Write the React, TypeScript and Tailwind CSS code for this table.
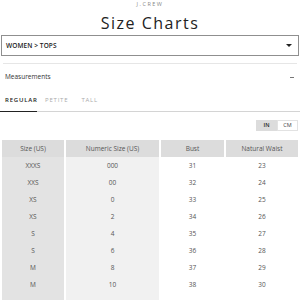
const rows = [
  ["XXXS", "000", "31", "23"],
  ["XXS", "00", "32", "24"],
  ["XS", "0", "33", "25"],
  ["XS", "2", "34", "26"],
  ["S", "4", "35", "27"],
  ["S", "6", "36", "28"],
  ["M", "8", "37", "29"],
  ["M", "10", "38", "30"],
];

const headers = ["Size (US)", "Numeric Size (US)", "Bust", "Natural Waist"];

export default function App() {
  return (
    <div className="w-[300px] h-[300px] overflow-hidden bg-white text-[#333] font-['Open_Sans',sans-serif]">
      {/* title */}
      <div className="text-center pt-[1px]">
        <div className="text-[5.5px] leading-[7px] tracking-[1.5px] text-[#888]">J.CREW</div>
        <div className="mt-[5px] text-[16px] leading-[20px] tracking-[1.5px] text-[#222]">Size Charts</div>
      </div>

      {/* category select */}
      <div className="mx-[1px] mt-[2px] h-[21px] border border-[#8f8f8f] flex items-center justify-between pl-[4px] pr-[6px]">
        <span className="text-[6.5px] font-semibold tracking-[0.1px] text-[#222]">WOMEN &gt; TOPS</span>
        <span className="w-0 h-0 border-l-[3px] border-r-[3px] border-t-[3px] border-l-transparent border-r-transparent border-t-[#222]" />
      </div>

      <div className="mx-[3px] mt-[7px] border-t border-[#e6e6e6]" />

      {/* measurements */}
      <div className="h-[26px] flex items-center justify-between pl-[5px] pr-[6px]">
        <span className="text-[6.5px] text-[#333]">Measurements</span>
        <span className="w-[4px] h-[1px] bg-[#777]" />
      </div>

      {/* tabs */}
      <div className="mt-[6px] flex border-b border-[#d4d4d4] text-[6px] tracking-[0.8px]">
        <div className="w-[37px] pl-[5px] pb-[6px] border-b border-[#222] -mb-[1px] text-[#222] font-semibold">REGULAR</div>
        <div className="pl-[8px] pb-[6px] text-[#aaa]">PETITE</div>
        <div className="pl-[13px] pb-[6px] text-[#aaa]">TALL</div>
      </div>

      {/* units */}
      <div className="mt-[8px] flex justify-end pr-[2px]">
        <div className="w-[21px] h-[11px] bg-[#dcdcdc] flex items-center justify-center text-[5.5px] font-semibold text-[#222]">IN</div>
        <div className="w-[21px] h-[11px] border border-[#e2e2e2] flex items-center justify-center text-[5.5px] text-[#444]">CM</div>
      </div>

      {/* table */}
      <div className="mt-[9px] px-[2px] text-[6.5px] text-[#555]">
        <div className="grid grid-cols-[62px_93px_63px_72px] gap-x-[2px]">
          {headers.map((h) => (
            <div key={h} className="h-[17px] bg-[#dcdcdc] flex items-center justify-center">
              {h}
            </div>
          ))}
        </div>
        {rows.map((r, i) => (
          <div key={i} className="grid grid-cols-[62px_93px_63px_72px] gap-x-[2px]">
            <div className="h-[17px] bg-[#e3e3e3] flex items-center justify-center">{r[0]}</div>
            <div className="h-[17px] bg-[#f1f1f1] flex items-center justify-center">{r[1]}</div>
            <div className="h-[17px] flex items-center justify-center">{r[2]}</div>
            <div className="h-[17px] flex items-center justify-center">{r[3]}</div>
          </div>
        ))}
        <div className="grid grid-cols-[62px_93px_63px_72px] gap-x-[2px]">
          <div className="h-[17px] bg-[#e3e3e3]" />
          <div className="h-[17px] bg-[#f1f1f1]" />
          <div className="h-[17px]" />
          <div className="h-[17px]" />
        </div>
      </div>
    </div>
  );
}
